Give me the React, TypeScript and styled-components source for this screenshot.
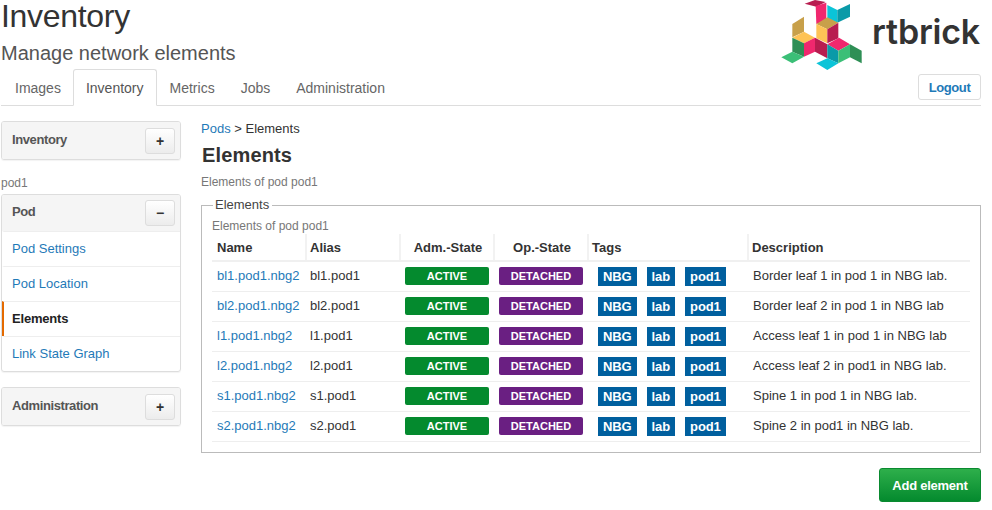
import React from "react";
import styled, { createGlobalStyle } from "styled-components";

const Global = createGlobalStyle`
  html, body { margin: 0; padding: 0; background: #fff; }
  body { font-family: "Liberation Sans", Arial, sans-serif; font-size: 14px; line-height: 20px; color: #333; }
  * { box-sizing: border-box; }
  a { color: #1f7ab8; text-decoration: none; }
`;

const Page = styled.div`
  width: 992px;
  height: 510px;
  overflow: hidden;
  padding: 0 11px 0 1px;
`;
const Header = styled.header`
  display: flex;
  justify-content: space-between;
  height: 69px;
`;
const Titles = styled.div``;
const Title = styled.h1`
  margin: 0;
  font-size: 32px;
  line-height: 33px;
  letter-spacing: -0.3px;
  font-weight: 400;
  color: #333;
`;
const Subtitle = styled.h2`
  margin: 9px 0 0;
  font-size: 20px;
  line-height: 22px;
  font-weight: 400;
  color: #555;
`;
const Logo = styled.div`
  display: flex;
  align-items: flex-start;
  margin-right: 1px;
`;
const LogoText = styled.span`
  font-family: "Inter", "Noto Sans", sans-serif;
  font-size: 34px;
  line-height: 64px;
  letter-spacing: -0.2px;
  font-weight: 600;
  color: #333;
  margin-left: 3px;
`;
const TabBar = styled.nav`
  display: flex;
  align-items: flex-end;
  height: 37px;
  border-bottom: 1px solid #ddd;
  position: relative;
`;
const Tab = styled.a<{ $active?: boolean }>`
  display: block;
  height: ${(p) => (p.$active ? "37px" : "36px")};
  padding: 0 12px;
  line-height: 37px;
  color: ${(p) => (p.$active ? "#555" : "#666")};
  background: #fff;
  border: 1px solid ${(p) => (p.$active ? "#ddd" : "transparent")};
  border-bottom: ${(p) => (p.$active ? "1px solid #fff" : "none")};
  border-radius: 3px 3px 0 0;
  margin-bottom: ${(p) => (p.$active ? "-1px" : "0")};
  &:first-child { padding: 0 11px 0 13px; }
`;
const Logout = styled.button`
  margin-left: auto;
  align-self: flex-start;
  margin-top: 5px;
  width: 63px;
  height: 26px;
  background: #fff;
  border: 1px solid #ddd;
  border-radius: 3px;
  color: #1f7ab8;
  font: bold 13px "Liberation Sans", Arial, sans-serif;
  letter-spacing: -0.4px;
  padding: 0;
`;
const Body = styled.div`
  display: flex;
  gap: 20px;
  padding-top: 15px;
`;
const Sidebar = styled.aside`
  width: 180px;
  flex: none;
`;
const Panel = styled.section`
  border: 1px solid #ddd;
  border-radius: 3px;
  margin-bottom: 15px;
  box-shadow: 0 1px 1px rgba(0, 0, 0, 0.05);
  overflow: hidden;
`;
const PanelHead = styled.div<{ $compact?: boolean }>`
  display: flex;
  justify-content: space-between;
  align-items: center;
  height: ${(p) => (p.$compact ? 36 : 37)}px;
  padding: 0 5px 0 10px;
  background: #f5f5f5;
`;
const PanelTitle = styled.span`
  margin-bottom: 2px;
  font-size: 13px;
  font-weight: bold;
  letter-spacing: -0.4px;
  color: #555;
`;
const Toggle = styled.button`
  width: 30px;
  height: 26px;
  padding: 0;
  border: 1px solid #ddd;
  border-radius: 3px;
  background: linear-gradient(#fff, #ececec);
  color: #333;
  font: bold 14px "Liberation Sans", Arial, sans-serif;
`;
const SideLabel = styled.div`
  font-size: 12px;
  line-height: 17px;
  color: #777;
  margin: 0 0 2px;
`;
const SideItem = styled.a<{ $active?: boolean }>`
  display: block;
  height: 35px;
  line-height: 33px;
  padding-left: 8px;
  font-size: 13px;
  border-top: 1px solid #eee;
  border-left: 2px solid ${(p) => (p.$active ? "#e46a00" : "transparent")};
  color: ${(p) => (p.$active ? "#222" : "#1f7ab8")};
  font-weight: ${(p) => (p.$active ? "bold" : "normal")};
  letter-spacing: ${(p) => (p.$active ? "-0.2px" : "0")};
`;
const Main = styled.main`
  flex: 1;
  min-width: 0;
`;
const Crumbs = styled.div`
  font-size: 13px;
  line-height: 16px;
`;
const Heading = styled.h3`
  margin: 5px 0 0 1px;
  font-size: 20px;
  line-height: 26px;
  letter-spacing: 0.15px;
  font-weight: bold;
  color: #333;
`;
const Muted = styled.div`
  font-size: 12px;
  line-height: 16px;
  color: #777;
`;
const Lead = styled(Muted)`
  margin-top: 6px;
`;
const Field = styled.fieldset`
  margin: 7px 0 0;
  padding: 0 10px 10px;
  height: 256px;
  border: 1px solid #bbb;
  min-width: 0;
`;
const Legend = styled.legend`
  padding: 0 3px 0 2px;
  margin-left: 1px;
  font-size: 13px;
  line-height: 16px;
  color: #444;
`;
const Sub = styled(Muted)`
  margin-top: 5px;
`;
const Table = styled.table`
  width: 758px;
  table-layout: fixed;
  border-collapse: collapse;
`;
const Th = styled.th<{ $center?: boolean }>`
  height: 27px;
  padding: ${(p) => (p.$center ? "2px 3px 0 5px" : "2px 3px 0")};
  font-size: 13px;
  font-weight: bold;
  text-align: ${(p) => (p.$center ? "center" : "left")};
  color: #333;
  border-right: 2px solid #f2f2f2;
  border-bottom: 2px solid #f0f0f0;
  &:first-child { padding-left: 5px; }
  &:last-child { border-right: none; }
`;
const Td = styled.td<{ $tight?: boolean }>`
  height: 30px;
  padding: 0 5px 0 ${(p) => (p.$tight ? 4 : 5)}px;
  font-size: 13px;
  border-bottom: 1px solid #eee;
  white-space: nowrap;
  color: #333;
`;
const State = styled.span<{ $bg: string }>`
  display: block;
  height: 18px;
  line-height: 18px;
  border-radius: 2px;
  background: ${(p) => p.$bg};
  color: #fff;
  font-size: 11px;
  font-weight: bold;
  text-align: center;
`;
const Tags = styled.div`
  display: flex;
  gap: 10px;
  padding-left: 5px;
`;
const Tag = styled.span`
  height: 19px;
  line-height: 19px;
  padding: 0 5px;
  background: #005f9e;
  color: #fff;
  font-weight: bold;
  letter-spacing: -0.1px;
`;
const Footer = styled.div`
  display: flex;
  justify-content: flex-end;
  margin-top: 15px;
`;
const AddButton = styled.button`
  width: 102px;
  height: 34px;
  border: 1px solid #0a8a30;
  border-radius: 3px;
  padding: 0;
  background: linear-gradient(#2eaf4b, #048a2e);
  color: #fff;
  font: bold 13px "Liberation Sans", Arial, sans-serif;
  letter-spacing: -0.25px;
`;

const polys: [string, string][] = [
  ["#b81d50", "77,11 108,0 140,6 112,20"],
  ["#f0286e", "110,18 142,8 142,60 112,72"],
  ["#0bc4d8", "145,15 175,30 175,68 145,55"],
  ["#0a9aa8", "175,30 213,12 213,50 175,68"],
  ["#c8a04a", "112,72 145,52 178,68 145,88"],
  ["#fec356", "112,72 145,88 145,130 112,115"],
  ["#b81d50", "145,88 178,68 178,115 145,130"],
  ["#c8a04a", "40,72 75,50 75,95 40,112"],
  ["#fec356", "40,113 75,95 108,113 75,130"],
  ["#2e8f55", "40,113 75,130 75,170 40,155"],
  ["#f0286e", "75,130 108,113 108,155 75,170"],
  ["#b81d50", "108,113 145,133 145,175 108,155"],
  ["#3bbf77", "7,172 40,155 75,170 40,190"],
  ["#f0286e", "145,133 180,113 213,133 178,152"],
  ["#0a9aa8", "145,133 178,152 178,190 145,175"],
  ["#3bbf77", "178,152 213,133 213,172 178,190"],
  ["#2e8f55", "213,133 248,152 248,190 213,172"],
  ["#0bc4d8", "112,190 145,175 178,190 145,210"],
];

const rows = [
  ["bl1.pod1.nbg2", "bl1.pod1", "Border leaf 1 in pod 1 in NBG lab."],
  ["bl2.pod1.nbg2", "bl2.pod1", "Border leaf 2 in pod 1 in NBG lab"],
  ["l1.pod1.nbg2", "l1.pod1", "Access leaf 1 in pod 1 in NBG lab"],
  ["l2.pod1.nbg2", "l2.pod1", "Access leaf 2 in pod1 in NBG lab."],
  ["s1.pod1.nbg2", "s1.pod1", "Spine 1 in pod 1 in NBG lab."],
  ["s2.pod1.nbg2", "s2.pod1", "Spine 2 in pod1 in NBG lab."],
];

export default function App() {
  return (
    <Page>
      <Global />
      <Header>
        <Titles>
          <Title>Inventory</Title>
          <Subtitle>Manage network elements</Subtitle>
        </Titles>
        <Logo>
          <svg width="90" height="75" viewBox="0 0 270 225">
            {polys.map(([c, p], i) => (
              <polygon key={i} fill={c} points={p} />
            ))}
          </svg>
          <LogoText>rtbrick</LogoText>
        </Logo>
      </Header>
      <TabBar>
        <Tab>Images</Tab>
        <Tab $active>Inventory</Tab>
        <Tab>Metrics</Tab>
        <Tab>Jobs</Tab>
        <Tab>Administration</Tab>
        <Logout>Logout</Logout>
      </TabBar>
      <Body>
        <Sidebar>
          <Panel>
            <PanelHead>
              <PanelTitle>Inventory</PanelTitle>
              <Toggle>+</Toggle>
            </PanelHead>
          </Panel>
          <SideLabel>pod1</SideLabel>
          <Panel>
            <PanelHead $compact>
              <PanelTitle>Pod</PanelTitle>
              <Toggle>−</Toggle>
            </PanelHead>
            <SideItem>Pod Settings</SideItem>
            <SideItem>Pod Location</SideItem>
            <SideItem $active>Elements</SideItem>
            <SideItem>Link State Graph</SideItem>
          </Panel>
          <Panel>
            <PanelHead>
              <PanelTitle>Administration</PanelTitle>
              <Toggle>+</Toggle>
            </PanelHead>
          </Panel>
        </Sidebar>
        <Main>
          <Crumbs>
            <a>Pods</a> &gt; Elements
          </Crumbs>
          <Heading>Elements</Heading>
          <Lead>Elements of pod pod1</Lead>
          <Field>
            <Legend>Elements</Legend>
            <Sub>Elements of pod pod1</Sub>
            <Table>
              <colgroup>
                <col width="94" />
                <col width="94" />
                <col width="94" />
                <col width="94" />
                <col width="160" />
                <col width="222" />
              </colgroup>
              <thead>
                <tr>
                  <Th>Name</Th>
                  <Th>Alias</Th>
                  <Th $center>Adm.-State</Th>
                  <Th $center>Op.-State</Th>
                  <Th>Tags</Th>
                  <Th>Description</Th>
                </tr>
              </thead>
              <tbody>
                {rows.map((r) => (
                  <tr key={r[0]}>
                    <Td>
                      <a>{r[0]}</a>
                    </Td>
                    <Td $tight>{r[1]}</Td>
                    <Td>
                      <State $bg="#048a2e">ACTIVE</State>
                    </Td>
                    <Td>
                      <State $bg="#6a1f82">DETACHED</State>
                    </Td>
                    <Td>
                      <Tags>
                        <Tag>NBG</Tag>
                        <Tag>lab</Tag>
                        <Tag>pod1</Tag>
                      </Tags>
                    </Td>
                    <Td>{r[2]}</Td>
                  </tr>
                ))}
              </tbody>
            </Table>
          </Field>
          <Footer>
            <AddButton>Add element</AddButton>
          </Footer>
        </Main>
      </Body>
    </Page>
  );
}
